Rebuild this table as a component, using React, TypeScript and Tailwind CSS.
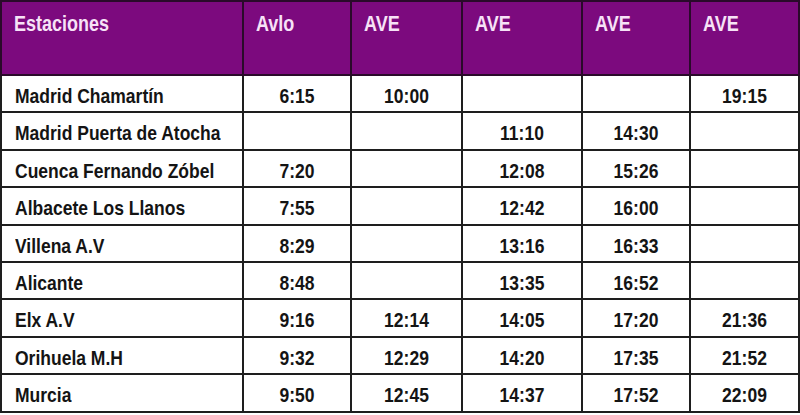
import React from "react";

const headers = ["Estaciones", "Avlo", "AVE", "AVE", "AVE", "AVE"];
const widths = ["w-[242px]", "w-[108px]", "w-[111px]", "w-[120px]", "w-[108px]", "w-[109px]"];

const rows: string[][] = [
  ["Madrid Chamartín", "6:15", "10:00", "", "", "19:15"],
  ["Madrid Puerta de Atocha", "", "", "11:10", "14:30", ""],
  ["Cuenca Fernando Zóbel", "7:20", "", "12:08", "15:26", ""],
  ["Albacete Los Llanos", "7:55", "", "12:42", "16:00", ""],
  ["Villena A.V", "8:29", "", "13:16", "16:33", ""],
  ["Alicante", "8:48", "", "13:35", "16:52", ""],
  ["Elx A.V", "9:16", "12:14", "14:05", "17:20", "21:36"],
  ["Orihuela M.H", "9:32", "12:29", "14:20", "17:35", "21:52"],
  ["Murcia", "9:50", "12:45", "14:37", "17:52", "22:09"],
];

const rowH = ["h-[37px]", "h-[38px]", "h-[37px]", "h-[38px]", "h-[37px]", "h-[37px]", "h-[38px]", "h-[37px]", "h-[38px]"];

export default function App() {
  return (
    <div className="w-[800px] h-[415px] bg-white" style={{ fontFamily: '"Liberation Sans", Arial, sans-serif' }}>
      <table className="w-[798px] border-collapse table-fixed border-2 border-[#1e1e1e]">
        <colgroup>
          {widths.map((w, i) => (
            <col key={i} className={w} />
          ))}
        </colgroup>
        <thead>
          <tr className="h-[74px] bg-[#7c0a7e]">
            {headers.map((h, i) => (
              <th
                key={i}
                className="border-2 border-[#2a0a2a] align-top text-left pl-[12px] pt-[10px] text-[18px] font-bold text-[#f7e2f7] leading-[1.15]"
              >
                <span className="inline-block scale-y-[1.18] origin-top">{h}</span>
              </th>
            ))}
          </tr>
        </thead>
        <tbody>
          {rows.map((r, ri) => (
            <tr key={ri} className={rowH[ri]}>
              {r.map((c, ci) => (
                <td
                  key={ci}
                  className={
                    "border-2 border-[#1e1e1e] align-middle pt-[5px] p-0 text-[17.5px] font-bold text-[#141414] leading-[1.15] " +
                    (ci === 0 ? "text-left pl-[13px]" : "text-center")
                  }
                >
                  <span className="inline-block scale-y-[1.15]">{c}</span>
                </td>
              ))}
            </tr>
          ))}
        </tbody>
      </table>
    </div>
  );
}
